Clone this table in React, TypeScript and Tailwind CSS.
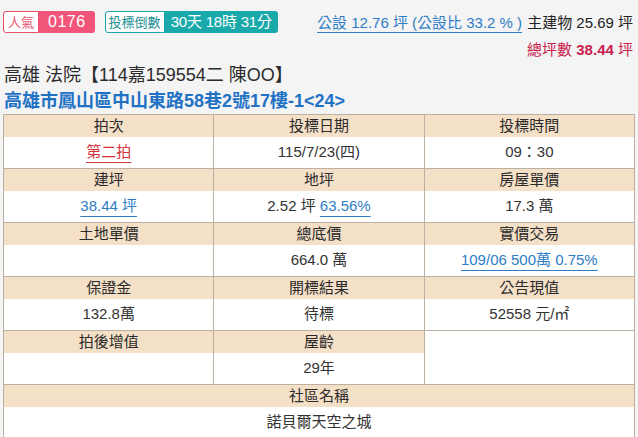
import React from "react";

const FONT = { fontFamily: '"Liberation Sans", "Noto Sans CJK TC", sans-serif' };

const H = "h-[23px] bg-[#f4dfc7] border-x border-t border-[#bcb0a2] text-center text-[15px] text-[#2b2b2b] p-0 align-middle";
const D = "h-[31px] bg-white border-x border-b border-[#bcb0a2] text-center text-[15px] text-[#333] p-0 align-middle";

export default function App() {
  return (
    <div className="w-[638px] h-[437px] overflow-hidden bg-[#f4f4f4]" style={FONT}>
      <div className="flex items-center pt-[10px] pl-[3px] pr-[5px]">
        <div className="flex h-[22px]">
          <span className="flex items-center px-[4px] border border-[#e8506d] rounded-l-[3px] bg-white text-[#e8506d] text-[13px]">人氣</span>
          <span className="flex items-center px-[9px] bg-[#f2557a] text-white text-[16px] rounded-r-[3px] tracking-[0.5px]">0176</span>
        </div>
        <div className="flex h-[22px] ml-[10px]">
          <span className="flex items-center px-[3px] border border-[#19a4a6] rounded-l-[3px] bg-white text-[#1c8f92] text-[13px]">投標倒數</span>
          <span className="flex items-center px-[6px] bg-[#1aa9ab] text-white text-[15px] tracking-[-0.2px] rounded-r-[3px]">30天 18時 31分</span>
        </div>
        <div className="ml-auto text-[15px] whitespace-nowrap pt-[2px]">
          <span className="text-[#2e7dc5] underline underline-offset-[4px] decoration-[#2e7dc5]">公設 12.76 坪 (公設比 33.2 % )</span>
          <span className="text-[#222] ml-[5px]">主建物 25.69 坪</span>
        </div>
      </div>
      <div className="flex justify-end pr-[5px] mt-[5px] text-[15px] text-[#c9204c] leading-[20px]">
        <span>總坪數 <b>38.44</b> 坪</span>
      </div>
      <div className="pl-[4px] mt-[3px] text-[18px] text-[#2b2b2b] leading-[24px]">高雄 法院【114嘉159554二 陳OO】</div>
      <div className="pl-[4px] mt-[2px] text-[18px] font-bold text-[#1f72c4] leading-[24px]">高雄市鳳山區中山東路58巷2號17樓-1&lt;24&gt;</div>
      <div className="pl-[3px] mt-[1px]">
        <table className="w-[632px] border-collapse table-fixed">
          <tbody>
            <tr>
              <td className={H}>拍次</td>
              <td className={H}>投標日期</td>
              <td className={H}>投標時間</td>
            </tr>
            <tr>
              <td className={D}><span className="text-[#d5343d] underline underline-offset-[5px]">第二拍</span></td>
              <td className={D}>115/7/23(四)</td>
              <td className={D}>09：30</td>
            </tr>
            <tr>
              <td className={H}>建坪</td>
              <td className={H}>地坪</td>
              <td className={H}>房屋單價</td>
            </tr>
            <tr>
              <td className={D}><span className="text-[#2e7dc5] underline underline-offset-[5px]">38.44 坪</span></td>
              <td className={D}>2.52 坪 <span className="text-[#2e7dc5] underline underline-offset-[5px]">63.56%</span></td>
              <td className={D}>17.3 萬</td>
            </tr>
            <tr>
              <td className={H}>土地單價</td>
              <td className={H}>總底價</td>
              <td className={H}>實價交易</td>
            </tr>
            <tr>
              <td className={D}></td>
              <td className={D}>664.0 萬</td>
              <td className={D}><span className="text-[#2e7dc5] underline underline-offset-[5px]">109/06 500萬 0.75%</span></td>
            </tr>
            <tr>
              <td className={H}>保證金</td>
              <td className={H}>開標結果</td>
              <td className={H}>公告現值</td>
            </tr>
            <tr>
              <td className={D}>132.8萬</td>
              <td className={D}>待標</td>
              <td className={D}>52558 元/㎡</td>
            </tr>
            <tr>
              <td className={H}>拍後增值</td>
              <td className={H}>屋齡</td>
              <td rowSpan={2} className="bg-white border border-[#bcb0a2] p-0"></td>
            </tr>
            <tr>
              <td className={D}></td>
              <td className={D}>29年</td>
            </tr>
            <tr>
              <td colSpan={3} className={H}>社區名稱</td>
            </tr>
            <tr>
              <td colSpan={3} className={D}>諾貝爾天空之城</td>
            </tr>
          </tbody>
        </table>
      </div>
    </div>
  );
}
